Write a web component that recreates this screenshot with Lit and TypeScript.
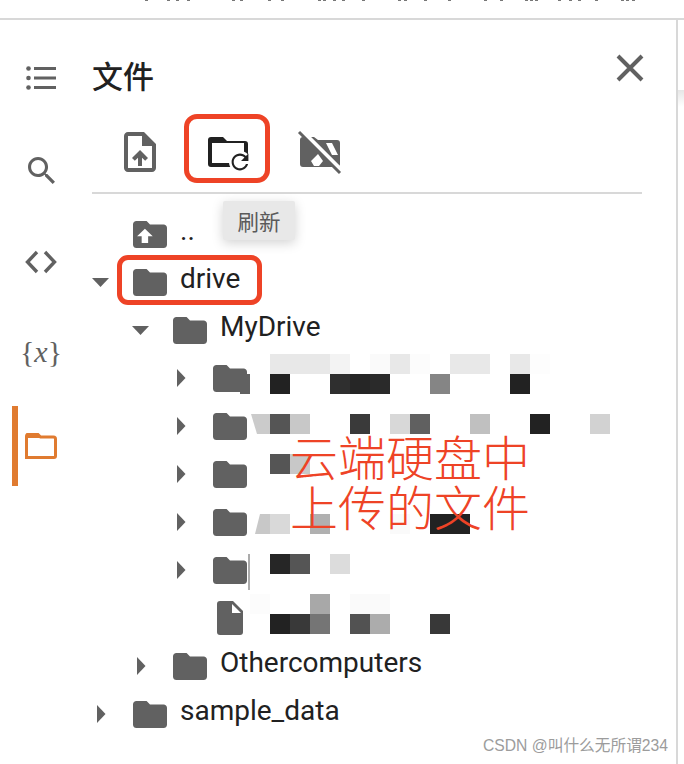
import { LitElement, html, css, svg } from "lit";
import { customElement } from "lit/decorators.js";

const folderIcon = html`<svg class="ficon" viewBox="2 4 20 16" preserveAspectRatio="none"><path d="M10 4H4c-1.1 0-2 .9-2 2v12c0 1.1.9 2 2 2h16c1.1 0 2-.9 2-2V8c0-1.1-.9-2-2-2h-8l-2-2z" fill="#616161"/></svg>`;
const parentIcon = html`<svg class="ficon" viewBox="2 4 20 16" preserveAspectRatio="none"><path d="M10 4H4c-1.1 0-2 .9-2 2v12c0 1.1.9 2 2 2h16c1.1 0 2-.9 2-2V8c0-1.1-.9-2-2-2h-8l-2-2z" fill="#616161"/><path d="M9 8.6l4.6 4.4h-2.7v4h-3.8v-4H4.4z" fill="#fff"/></svg>`;
const fileIcon = html`<svg class="fileicon" viewBox="0 0 26 34"><path d="M3 0h13l10 10v21a3 3 0 0 1-3 3H3a3 3 0 0 1-3-3V3a3 3 0 0 1 3-3z" fill="#616161"/><path d="M15 3l9 9h-9z" fill="#fff"/></svg>`;

type Row = { depth: number; arrow: "" | "down" | "right"; icon: "folder" | "parent" | "file"; label: string };
const rows: Row[] = [
  { depth: 0, arrow: "", icon: "parent", label: ".." },
  { depth: 0, arrow: "down", icon: "folder", label: "drive" },
  { depth: 1, arrow: "down", icon: "folder", label: "MyDrive" },
  { depth: 2, arrow: "right", icon: "folder", label: "" },
  { depth: 2, arrow: "right", icon: "folder", label: "" },
  { depth: 2, arrow: "right", icon: "folder", label: "" },
  { depth: 2, arrow: "right", icon: "folder", label: "" },
  { depth: 2, arrow: "right", icon: "folder", label: "" },
  { depth: 2, arrow: "", icon: "file", label: "" },
  { depth: 1, arrow: "right", icon: "folder", label: "Othercomputers" },
  { depth: 0, arrow: "right", icon: "folder", label: "sample_data" },
];

/* x, y of the 20px pixelated cell (page px), colour, optional span in cells */
const cells: [number, number, string, number?][] = [
  [270, 354, "#e8e8e8", 3], [330, 354, "#f3f3f3"], [370, 354, "#fafafa"], [390, 354, "#e8e8e8"], [410, 354, "#fcfcfc"],
  [450, 354, "#e8e8e8", 2], [510, 354, "#e8e8e8"], [530, 354, "#fdfdfd"],
  [270, 374, "#222"], [330, 374, "#2f2f2f"], [350, 374, "#262626"], [370, 374, "#2a2a2a"], [430, 374, "#858585"], [510, 374, "#222"],
  [270, 414, "#555"], [290, 414, "#c8c8c8"], [350, 414, "#3a3a3a"], [390, 414, "#d8d8d8"], [410, 414, "#606060"],
  [470, 414, "#c0c0c0"], [530, 414, "#222"], [590, 414, "#d2d2d2"],
  [270, 454, "#555"], [290, 454, "#c8c8c8"],
  [270, 514, "#d9d9d9"], [310, 514, "#b0b0b0"], [390, 514, "#fafafa"], [430, 514, "#222", 2],
  [270, 554, "#262626"], [290, 554, "#555"], [330, 554, "#dcdcdc"],
  [250, 594, "#fcfcfc"], [310, 594, "#a8a8a8"], [350, 594, "#fafafa", 2],
  [270, 614, "#222"], [290, 614, "#393939"], [310, 614, "#757575"], [350, 614, "#525252"], [370, 614, "#acacac"], [430, 614, "#383838"],
];

const ticks = [145, 167, 176, 187, 232, 240, 268, 281, 318, 323, 333, 342, 362, 398, 404, 424, 448, 484, 500, 525, 530, 535, 558, 569, 578, 595, 621, 626, 632];

@customElement("app-root")
export class AppRoot extends LitElement {
  static styles = css`
    :host { display: block; width: 684px; height: 764px; background: #fff; overflow: hidden; position: relative;
      font-family: Roboto, "Noto Sans CJK SC", sans-serif; color: #212121; }
    .top { display: block; width: 684px; height: 18px; }
    .hr { height: 2px; background: #d8d8d8; }
    .shell { display: flex; height: 744px; width: 678px; border-right: 2px solid #d8d8d8; box-sizing: border-box; }
    .rail { width: 92px; flex: none; padding: 18px 0 0 12px; box-sizing: border-box; display: flex; flex-direction: column; gap: 12px; }
    .rail-item { width: 52px; height: 80px; flex: none; box-sizing: border-box; border-left: 6px solid transparent;
      display: flex; align-items: center; justify-content: center; }
    .rail-item.active { border-left-color: #e07b30; }
    .math { font-family: "Liberation Serif", serif; font-size: 30px; color: #616161; white-space: nowrap; position: relative; top: -2px; }
    .main { width: 550px; flex: none; }
    .head { display: flex; justify-content: space-between; align-items: flex-start; height: 108px; box-sizing: border-box; padding-top: 33px; }
    .title { font-size: 31px; font-weight: 500; line-height: 44px; font-family: "Noto Sans CJK SC", sans-serif; }
    .close { width: 28px; height: 28px; margin: 1px -2px 0 0; display: block; }
    .toolbar { display: flex; align-items: center; height: 48px; padding-bottom: 16px; border-bottom: 2px solid #d8d8d8; }
    .toolbar svg { display: block; flex: none; overflow: visible; }
    .tb1 { margin-left: 32px; }
    .tb2 { margin-left: 52px; }
    .tb3 { margin-left: 48px; }
    .tree { padding-top: 16px; }
    .row { display: flex; align-items: center; height: 48px; font-size: 28px; line-height: 34px; white-space: nowrap; }
    .arrow { width: 41px; flex: none; display: block; height: 18px; }
    .slot { width: 34px; height: 28px; flex: none; display: flex; align-items: center; justify-content: center; }
    .ficon { width: 34px; height: 27px; display: block; }
    .fileicon { width: 26px; height: 34px; display: block; flex: none; }
    .label { margin-left: 13px; position: relative; top: -3px; }
    .mosaic { position: absolute; left: 230px; top: 354px; display: grid; grid-template-columns: repeat(20, 20px); grid-template-rows: repeat(14, 20px); }
    .slant1 { clip-path: polygon(5% 0, 100% 0, 100% 100%, 35% 100%); background: #cbcbcb; }
    .slant2 { clip-path: polygon(50% 0, 100% 0, 100% 100%, 25% 100%); background: #c8c8c8; }
    .notch { justify-self: end; width: 10px; background: #616161; }
    .sliver { justify-self: end; width: 2px; height: 36px; background: #ababab; }
    .note { position: absolute; left: 250px; top: 430px; width: 320px; text-align: center; color: #ee4326; font-size: 48px;
      font-family: "Noto Sans CJK SC", sans-serif; font-weight: 300; }
    .note div { height: 50px; line-height: 50px; }
    .box { position: absolute; border: 5px solid #ee4326; box-sizing: border-box; }
    .box.refresh { left: 184px; top: 114px; width: 86px; height: 69px; border-radius: 13px; }
    .box.drive { left: 117px; top: 255px; width: 145px; height: 50px; border-radius: 11px; }
    .tip { position: absolute; left: 223px; top: 201px; width: 72px; height: 39px; display: flex; align-items: center; justify-content: center;
      background: #e8e8e8; border-radius: 2px; font-size: 21.500px; color: #5a5a5a; box-shadow: 0 3px 12px rgba(0,0,0,.18);
      font-family: "Noto Sans CJK SC", sans-serif; }
    .fade { position: absolute; left: 678px; top: 90px; width: 6px; height: 17px; background: linear-gradient(#e6e6e6, #fff); }
    .mark { position: absolute; left: 483px; top: 736px; font-size: 15.700px; line-height: 20px; color: #9c9c9c; white-space: nowrap;
      font-family: "Liberation Sans", "Noto Sans CJK SC", sans-serif; }
  `;

  arrow(a: string) {
    if (a === "down") return html`<svg class="arrow" viewBox="0 0 41 18"><path d="M0 5h17l-8.500 9z" fill="#616161"/></svg>`;
    if (a === "right") return html`<svg class="arrow" viewBox="0 0 41 18"><path d="M5 0l8.500 9-8.500 9z" fill="#616161"/></svg>`;
    return html`<span class="arrow"></span>`;
  }

  render() {
    return html`
      <svg class="top" viewBox="0 0 684 18">${ticks.map((x) => svg`<rect x=${x} y="0" width="3" height="1" fill="#777"/>`)}</svg>
      <div class="hr"></div>
      <div class="shell">
        <nav class="rail">
          <div class="rail-item"><svg width="30" height="24" viewBox="0 0 30 24" fill="#616161"><circle cx="2.500" cy="2.500" r="2.300"/><circle cx="2.500" cy="12" r="2.300"/><circle cx="2.500" cy="21.500" r="2.300"/><rect x="8" y="1" width="22" height="3"/><rect x="8" y="10.500" width="22" height="3"/><rect x="8" y="20" width="22" height="3"/></svg></div>
          <div class="rail-item"><svg width="27" height="27" viewBox="3 3 17.500 17.500"><path d="M15.500 14h-.79l-.28-.27C15.410 12.590 16 11.110 16 9.500 16 5.910 13.090 3 9.500 3S3 5.910 3 9.500 5.910 16 9.500 16c1.610 0 3.090-.59 4.230-1.570l.27.28v.79l5 4.990L20.490 19l-4.990-5zm-6 0C7.010 14 5 11.990 5 9.500S7.010 5 9.500 5 14 7.010 14 9.500 11.990 14 9.500 14z" fill="#616161"/></svg></div>
          <div class="rail-item"><svg width="32" height="24" viewBox="0 0 32 24" fill="none" stroke="#616161" stroke-width="3.400"><path d="M12 2L2.500 12 12 22"/><path d="M20 2l9.500 10L20 22"/></svg></div>
          <div class="rail-item"><span class="math">{<i>x</i>}</span></div>
          <div class="rail-item active"><svg width="32" height="26" viewBox="0 0 32 26"><path d="M1.500 24.500V3a2 2 0 0 1 2-2h9l3 3h13a2 2 0 0 1 2 2v17a1.500 1.500 0 0 1-1.500 1.500z" fill="none" stroke="#e07b30" stroke-width="3"/><path d="M1 5V3a2 2 0 0 1 2-2h9l3.500 4z" fill="#e07b30"/></svg></div>
        </nav>
        <div class="main">
          <div class="head">
            <div class="title">文件</div>
            <svg class="close" viewBox="0 0 28 28" fill="none" stroke="#616161" stroke-width="4"><path d="M2 2l24 24M26 2L2 26"/></svg>
          </div>
          <div class="toolbar">
            <svg class="tb1" width="32" height="40" viewBox="4 2 16 20"><path d="M14 2H6c-1.100 0-2 .9-2 2v16c0 1.100.9 2 2 2h12c1.100 0 2-.9 2-2V8l-6-6zm4 18H6V4h7v5h5v11z" fill="#616161"/><path d="M8 15.010l1.410 1.410L11 14.840V19h2v-4.160l1.590 1.590L16 15.010 12.010 11z" fill="#616161"/></svg>
            <svg class="tb2" width="42" height="32" viewBox="0 0 42 32" fill="#212121">
              <path fill-rule="evenodd" d="M3 1h12l4 4h18a3 3 0 0 1 3 3v20a3 3 0 0 1-3 3H3a3 3 0 0 1-3-3V4a3 3 0 0 1 3-3zM4 7v20h32V7z"/>
              <circle cx="32" cy="26" r="11" fill="#fff"/>
              <path transform="translate(19.400 13.400) scale(1.050)" d="M17.650 6.350C16.200 4.900 14.210 4 12 4c-4.420 0-7.990 3.580-7.990 8s3.570 8 7.990 8c3.730 0 6.840-2.550 7.730-6h-2.080c-.82 2.330-3.040 4-5.650 4-3.310 0-6-2.690-6-6s2.690-6 6-6c1.660 0 3.140.69 4.220 1.780L13 11h7V4l-2.350 2.350z"/>
            </svg>
            <svg class="tb3" width="44" height="44" viewBox="0 0 44 44">
              <path d="M5 7h11l4 3h19a3 3 0 0 1 3 3v21a3 3 0 0 1-3 3H5a3 3 0 0 1-3-3V10a3 3 0 0 1 3-3z" fill="#616161"/>
              <path d="M28 13h6l6 12h-6z M20 24l5 7-4 5h-5l-3-5z" fill="#fff"/>
              <path d="M2.500 0.500L43 41" stroke="#fff" stroke-width="6"/>
              <path d="M1 2l41 41" stroke="#616161" stroke-width="3"/>
            </svg>
          </div>
          <div class="tree">
            ${rows.map(
              (r) => html`<div class="row" style="padding-left:${r.depth * 40}px">
                ${this.arrow(r.arrow)}
                <span class="slot">${r.icon === "folder" ? folderIcon : r.icon === "parent" ? parentIcon : fileIcon}</span>
                ${r.label ? html`<span class="label">${r.label}</span>` : ""}
              </div>`
            )}
          </div>
        </div>
      </div>

      <div class="mosaic" aria-hidden="true">
        ${cells.map(
          ([x, y, c, span]) => html`<div style="grid-column:${(x - 230) / 20 + 1} / span ${span ?? 1};grid-row:${(y - 354) / 20 + 1};background:${c}"></div>`
        )}
        <div class="notch" style="grid-column:1;grid-row:2"></div>
        <div class="slant1" style="grid-column:2;grid-row:4"></div>
        <div class="slant2" style="grid-column:2;grid-row:9"></div>
        <div class="sliver" style="grid-column:1;grid-row:11 / span 2"></div>
      </div>

      <div class="box refresh"></div>
      <div class="box drive"></div>
      <div class="tip">刷新</div>
      <div class="fade"></div>
      <div class="note"><div>云端硬盘中</div><div>上传的文件</div></div>
      <div class="mark">CSDN @叫什么无所谓234</div>
    `;
  }
}
